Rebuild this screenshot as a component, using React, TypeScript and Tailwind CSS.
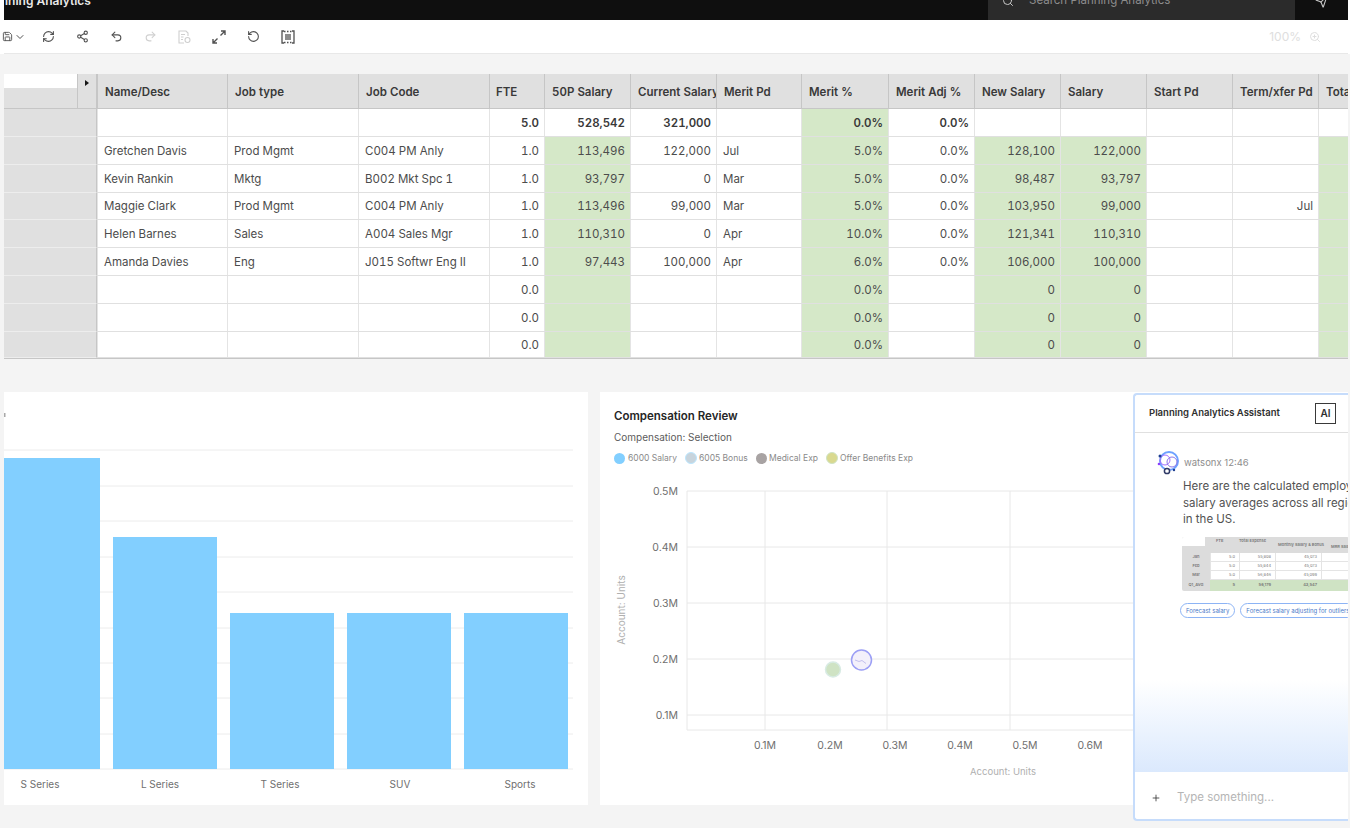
// App.tsx
import React from 'react'
import { ChevronDown, RefreshCw, Share2, Undo2, Redo2, RotateCcw, ZoomIn, Search, Plus, Save, Send } from 'lucide-react'

const columns = ['Name/Desc', 'Job type', 'Job Code', 'FTE', '50P Salary', 'Current Salary', 'Merit Pd', 'Merit %', 'Merit Adj %', 'New Salary', 'Salary', 'Start Pd', 'Term/xfer Pd', 'Total']

// cell alignment and green input columns, by column index
const greenCols = [4, 7, 9, 10, 13]
const leftCols = [0, 1, 2, 6]

const rows = [
  { h: 'h-[28px]', bold: true, cells: ['', '', '', '5.0', '528,542', '321,000', '', '0.0%', '0.0%', '', '', '', '', ''] },
  { h: 'h-[28px]', cells: ['Gretchen Davis', 'Prod Mgmt', 'C004 PM Anly', '1.0', '113,496', '122,000', 'Jul', '5.0%', '0.0%', '128,100', '122,000', '', '', ''] },
  { h: 'h-[28px]', cells: ['Kevin Rankin', 'Mktg', 'B002 Mkt Spc 1', '1.0', '93,797', '0', 'Mar', '5.0%', '0.0%', '98,487', '93,797', '', '', ''] },
  { h: 'h-[27px]', cells: ['Maggie Clark', 'Prod Mgmt', 'C004 PM Anly', '1.0', '113,496', '99,000', 'Mar', '5.0%', '0.0%', '103,950', '99,000', '', 'Jul', ''] },
  { h: 'h-[28px]', cells: ['Helen Barnes', 'Sales', 'A004 Sales Mgr', '1.0', '110,310', '0', 'Apr', '10.0%', '0.0%', '121,341', '110,310', '', '', ''] },
  { h: 'h-[28px]', cells: ['Amanda Davies', 'Eng', 'J015 Softwr Eng II', '1.0', '97,443', '100,000', 'Apr', '6.0%', '0.0%', '106,000', '100,000', '', '', ''] },
  { h: 'h-[28px]', cells: ['', '', '', '0.0', '', '', '', '0.0%', '', '0', '0', '', '', ''] },
  { h: 'h-[28px]', cells: ['', '', '', '0.0', '', '', '', '0.0%', '', '0', '0', '', '', ''] },
  { h: 'h-[26px]', cells: ['', '', '', '0.0', '', '', '', '0.0%', '', '0', '0', '', '', ''] },
]

const gridCols = 'grid grid-cols-[93px_130px_131px_131px_55px_86px_86px_85px_87px_86px_86px_86px_86px_86px_30px]'

function ExpandIcon() {
  return (
    <svg width="14" height="14" viewBox="0 0 14 14" fill="none" stroke="currentColor" strokeWidth="1.4" className="ml-[21px]">
      <path d="M8.5 5.5 13 1M9 1h4v4" />
      <path d="M5.5 8.5 1 13M1 9v4h4" />
    </svg>
  )
}

function DocIcon() {
  return (
    <svg width="13" height="14" viewBox="0 0 13 14" fill="none" stroke="#cfcfcf" strokeWidth="1.1" className="ml-[21px]">
      <path d="M6 13H1V1h7l2 2v3" />
      <path d="M3 4.5h4M3 7h2.5M3 9.5h2" />
      <circle cx="9.5" cy="10" r="2.5" />
    </svg>
  )
}

function FitIcon() {
  return (
    <svg width="14" height="14" viewBox="0 0 14 14" fill="none" stroke="#525252" strokeWidth="1.3" className="ml-[21px]">
      <path d="M3 1H1v12h2M11 1h2v12h-2" />
      <rect x="4" y="4" width="6" height="6" fill="#8d8d8d" stroke="none" />
      <path d="M3 1.5h8M3 12.5h8" strokeDasharray="1.5 1.5" />
    </svg>
  )
}

function BarChart() {
  const lines = [450, 486, 521, 557, 592, 628, 663, 698, 734, 769]
  const bars = [
    { x: 0, w: 96, top: 458 },
    { x: 109, w: 104, top: 537 },
    { x: 226, w: 104, top: 613 },
    { x: 343, w: 104, top: 613 },
    { x: 460, w: 104, top: 613 },
  ]
  const labels = [
    { x: 36, t: 'S Series' },
    { x: 156, t: 'L Series' },
    { x: 276, t: 'T Series' },
    { x: 396, t: 'SUV' },
    { x: 516, t: 'Sports' },
  ]
  return (
    <svg width="584" height="413" viewBox="0 392 584 413" className="block">
      <rect x="0" y="413" width="1.5" height="4" fill="#a8a8a8" />
      {lines.map((y) => (
        <line key={y} x1="0" x2="569" y1={y} y2={y} stroke="#ececec" strokeWidth="1" />
      ))}
      {bars.map((b) => (
        <rect key={b.x} x={b.x} y={b.top} width={b.w} height={769 - b.top} fill="#82cfff" />
      ))}
      {labels.map((l) => (
        <text key={l.t} x={l.x} y="788" textAnchor="middle" fontSize="10" fill="#6f6f6f">{l.t}</text>
      ))}
    </svg>
  )
}

function ScatterChart() {
  const yTicks = [
    { y: 491, t: '0.5M' },
    { y: 547, t: '0.4M' },
    { y: 603, t: '0.3M' },
    { y: 659, t: '0.2M' },
    { y: 715, t: '0.1M' },
  ]
  const xTicks = [
    { x: 765, t: '0.1M' },
    { x: 830, t: '0.2M' },
    { x: 895, t: '0.3M' },
    { x: 960, t: '0.4M' },
    { x: 1025, t: '0.5M' },
    { x: 1090, t: '0.6M' },
  ]
  return (
    <svg width="748" height="340" viewBox="600 465 748 340" className="block">
      {yTicks.map((t) => (
        <g key={t.y}>
          <line x1="687" x2="1135" y1={t.y} y2={t.y} stroke="#e8e8e8" />
          <text x="678" y={t.y + 4} textAnchor="end" fontSize="10.5" fill="#6f6f6f">{t.t}</text>
        </g>
      ))}
      <line x1="687" x2="1135" y1="730" y2="730" stroke="#e8e8e8" />
      {[687, 765, 887, 1010].map((x) => (
        <line key={x} x1={x} x2={x} y1="491" y2="730" stroke="#e8e8e8" />
      ))}
      {xTicks.map((t) => (
        <text key={t.x} x={t.x} y="749" textAnchor="middle" fontSize="10.5" fill="#6f6f6f">{t.t}</text>
      ))}
      <text x="1003" y="775" textAnchor="middle" fontSize="9.5" fill="#b0b0b0">Account: Units</text>
      <text transform="translate(625 610) rotate(-90)" textAnchor="middle" fontSize="10" fill="#b0b0b0">Account: Units</text>
      <circle cx="833" cy="669.5" r="7.5" fill="#cfe3c4" stroke="#d8ebe4" strokeWidth="1.5" />
      <circle cx="861.5" cy="660" r="10" fill="#f3f0fb" stroke="#9c9ff5" strokeWidth="1.5" />
      <path d="M855 660l4 1.5 3-1 4 3" fill="none" stroke="#c4c0ee" strokeWidth="1" />
    </svg>
  )
}

function WatsonLogo() {
  return (
    <svg width="24" height="24" viewBox="0 0 24 24" fill="none">
      <circle cx="13" cy="10" r="9" stroke="#6ea1ff" strokeWidth="2" />
      <circle cx="9" cy="9" r="5" stroke="#a56eff" strokeWidth="1" />
      <circle cx="16" cy="11" r="5" stroke="#8a76e8" strokeWidth="1" />
      <circle cx="11" cy="20" r="2.6" stroke="#2f3a66" strokeWidth="1.5" fill="#fff" />
      <circle cx="4" cy="5" r="1.5" fill="#1c3d8f" />
      <circle cx="18" cy="19" r="1.2" fill="#1c3d8f" />
      <circle cx="3" cy="13" r="1.3" fill="#8a3ffc" />
    </svg>
  )
}

function MiniTable() {
  const mini = [
    ['Jan', '5.0', '55,808', '45,073', '45,1'],
    ['Feb', '5.0', '55,844', '45,073', '45,1'],
    ['Mar', '5.0', '56,846', '45,099', '46,1'],
  ]
  const cols = 'grid grid-cols-[28px_29px_36px_46px_44px]'
  return (
    <div className="-ml-[1px] mt-[9px] w-[167px] overflow-hidden rounded-[2px] bg-[#dcdcdc] text-[4px] leading-none text-[#777777]">
      <div className={`${cols} h-[16px]`}>
        <div className="h-[9px] w-[23px] bg-white" />
        <div className="pl-[6px] pt-[2px] font-semibold">FTE</div>
        <div className="pt-[2px] font-semibold">Total Expense</div>
        <div className="pl-[3px] pt-[5px] font-semibold leading-[5px]">Monthly Salary &amp; Bonus</div>
        <div className="pl-[10px] pt-[8px] font-semibold">MRR Salary</div>
      </div>
      {mini.map((r) => (
        <div key={r[0]} className={`${cols} h-[9px]`}>
          <div className="flex items-center justify-center font-semibold">{r[0]}</div>
          {r.slice(1).map((c, i) => (
            <div key={i} className="flex items-center justify-end border-b border-l border-[#e4e4e4] bg-white pr-[4px]">{c}</div>
          ))}
        </div>
      ))}
      <div className={`${cols} h-[11px]`}>
        <div className="flex items-center justify-center font-semibold">Q1_AVG</div>
        {['5', '56,179', '43,547', '44,1'].map((c) => (
          <div key={c} className="flex items-center justify-end bg-[#cfe3c4] pr-[4px] font-semibold">{c}</div>
        ))}
      </div>
    </div>
  )
}

function Assistant() {
  return (
    <div className="absolute right-[2px] top-[393px] flex h-[428px] w-[215px] flex-col overflow-hidden rounded-tl-[4px] rounded-bl-[4px] border-y-2 border-l-2 border-[#c6dcfb] bg-white">
      <div className="flex h-[38px] shrink-0 items-center justify-between border-b border-[#e0e0e0] pl-[14px] pr-[12px]">
        <span className="text-[9.5px] font-semibold text-[#2f2f2f]">Planning Analytics Assistant</span>
        <span className="flex h-[21px] w-[21px] items-center justify-center border border-[#393939] text-[10px] font-semibold text-[#2f2f2f]">AI</span>
      </div>
      <div className="flex-1 overflow-hidden whitespace-nowrap pl-[21px] pt-[18px]">
        <div className="flex items-center gap-[4px]">
          <WatsonLogo />
          <span className="text-[9.5px] text-[#8d8d8d]">watsonx 12:46</span>
        </div>
        <div className="pl-[27px]">
          <p className="mt-[3px] text-[11.5px] leading-[16.5px] text-[#525252]">
            Here are the calculated employee
            <br />
            salary averages across all regions
            <br />
            in the US.
          </p>
          <MiniTable />
          <div className="-ml-[3px] mt-[12px] flex gap-[5px] text-[6px] leading-[11px] text-[#4a79c8]">
            <span className="rounded-full border-[1.5px] border-[#8db4f5] px-[5px] py-[1px]">Forecast salary</span>
            <span className="rounded-full border-[1.5px] border-[#8db4f5] px-[5px] py-[1px]">Forecast salary adjusting for outliers</span>
          </div>
        </div>
      </div>
      <div className="h-[92px] shrink-0 bg-gradient-to-b from-white to-[#dbe9fd]" />
      <div className="flex h-[47px] shrink-0 items-center gap-[16px] pl-[16px] pt-[4px]">
        <Plus size={10} strokeWidth={2} className="text-[#393939]" />
        <span className="text-[11.5px] text-[#b5b5b5]">Type something...</span>
      </div>
    </div>
  )
}

export default function App() {
  return (
    <div className="relative h-[828px] w-[1350px] overflow-hidden bg-[#f4f4f4] font-['Inter','Liberation_Sans',sans-serif]">
      <div className="bg-white pl-[4px] pr-[2px]">
        {/* header bar, cut off at the top of the shot */}
        <header className="flex h-[20px] items-end justify-between overflow-hidden bg-[#0f0f0f]">
          <span className="-ml-[21px] translate-y-[-13px] whitespace-nowrap text-[12px] font-semibold leading-none text-[#e8e8e8]">Planning Analytics</span>
          <div className="flex h-full items-center">
            <div className="flex h-full w-[307px] items-center gap-[15px] bg-[#2b2b2b] pl-[14px]">
              <Search size={12} className="-translate-y-[9px] text-[#c6c6c6]" />
              <span className="-translate-y-[9px] text-[11.5px] leading-none text-[#8d8d8d]">Search Planning Analytics</span>
            </div>
            <div className="flex w-[53px] justify-center">
              <Send size={13} className="-translate-y-[9px] text-[#c6c6c6]" />
            </div>
          </div>
        </header>

        {/* toolbar */}
        <div className="flex h-[34px] items-center border-b border-[#e8e8e8] bg-white pr-[27px] text-[#525252]">
          <div className="flex flex-1 items-center">
            <Save size={11} className="-ml-[2px]" />
            <ChevronDown size={12} className="ml-[1px]" />
            <RefreshCw size={13} className="ml-[16px]" />
            <Share2 size={13} className="ml-[21px]" />
            <Undo2 size={13} className="ml-[21px]" />
            <Redo2 size={13} className="ml-[21px] text-[#d0d0d0]" />
            <DocIcon />
            <ExpandIcon />
            <RotateCcw size={13} className="ml-[21px]" />
            <FitIcon />
          </div>
          <span className="pt-px text-[12px] text-[#dedede]">100%</span>
          <ZoomIn size={12} className="ml-[8px] text-[#dedede]" />
        </div>
      </div>

      {/* worksheet */}
      <div className="ml-[4px] mr-[2px] mt-[20px] overflow-hidden border-b border-[#c6c6c6] bg-white text-[11.5px] tabular-nums text-[#4c4c4c]">
        <div className={`${gridCols} h-[35px] border-b border-[#c6c6c6] bg-[#e0e0e0] font-semibold text-[#393939]`}>
          <div className="relative h-[35px]">
            <div className="h-[14px] w-[73px] bg-white" />
            <span className="absolute left-[81px] top-[6px] h-0 w-0 border-y-[3px] border-l-[4px] border-y-transparent border-l-[#161616]" />
            <span className="absolute left-[73px] top-0 h-full w-px bg-[#c6c6c6]" />
            <span className="absolute right-0 top-0 h-full w-px bg-[#c6c6c6]" />
          </div>
          {columns.map((c, i) => (
            <div key={c} className={`flex items-center overflow-hidden whitespace-nowrap border-l border-[#c6c6c6] pt-[2px] ${i === 3 ? 'pl-[6px]' : 'pl-[7px]'}`}>
              {c}
            </div>
          ))}
        </div>
        {rows.map((r, ri) => (
          <div key={ri} className={`${gridCols} ${r.h} border-b border-[#e0e0e0] ${r.bold ? 'font-semibold text-[#393939]' : ''}`}>
            <div className="-mb-px border-b border-r border-b-[#ededed] border-r-[#c6c6c6] bg-[#e0e0e0]" />
            {r.cells.map((c, i) => (
              <div
                key={i}
                className={`flex items-center overflow-hidden whitespace-nowrap border-l border-[#e4e4e4] pt-[2px] ${leftCols.includes(i) ? 'pl-[6px]' : 'justify-end pr-[5px]'} ${greenCols.includes(i) && (!r.bold || i === 7) ? 'bg-[#d5e8c8]' : ''}`}
              >
                {c}
              </div>
            ))}
          </div>
        ))}
      </div>

      {/* charts */}
      <div className="ml-[4px] mr-[2px] mt-[33px] flex gap-[12px]">
        <section className="h-[413px] w-[584px] shrink-0 bg-white">
          <BarChart />
        </section>
        <section className="h-[413px] flex-1 overflow-hidden bg-white">
          <div className="h-[73px] pl-[14px] pt-[16px]">
            <h3 className="text-[11.5px] font-semibold leading-[16px] text-[#262626]">Compensation Review</h3>
            <p className="mt-[6px] text-[10px] leading-[14px] text-[#5c5c5c]">Compensation: Selection</p>
            <div className="mt-[8px] flex items-center text-[8.5px] leading-none text-[#8a8a8a]">
              <span className="h-[11px] w-[11px] rounded-full bg-[#82cfff]" />
              <span className="ml-[3px] w-[57px]">6000 Salary</span>
              <span className="h-[12px] w-[12px] rounded-full border border-[#bae6ff] bg-[#c8d4dc]" />
              <span className="ml-[2px] w-[57px]">6005 Bonus</span>
              <span className="h-[11px] w-[11px] rounded-full bg-[#a8a3a3]" />
              <span className="ml-[2px] w-[57px]">Medical Exp</span>
              <span className="h-[12px] w-[12px] rounded-full border border-[#cfe3c4] bg-[#d9d98f]" />
              <span className="ml-[2px]">Offer Benefits Exp</span>
            </div>
          </div>
          <ScatterChart />
        </section>
      </div>

      <Assistant />
    </div>
  )
}
